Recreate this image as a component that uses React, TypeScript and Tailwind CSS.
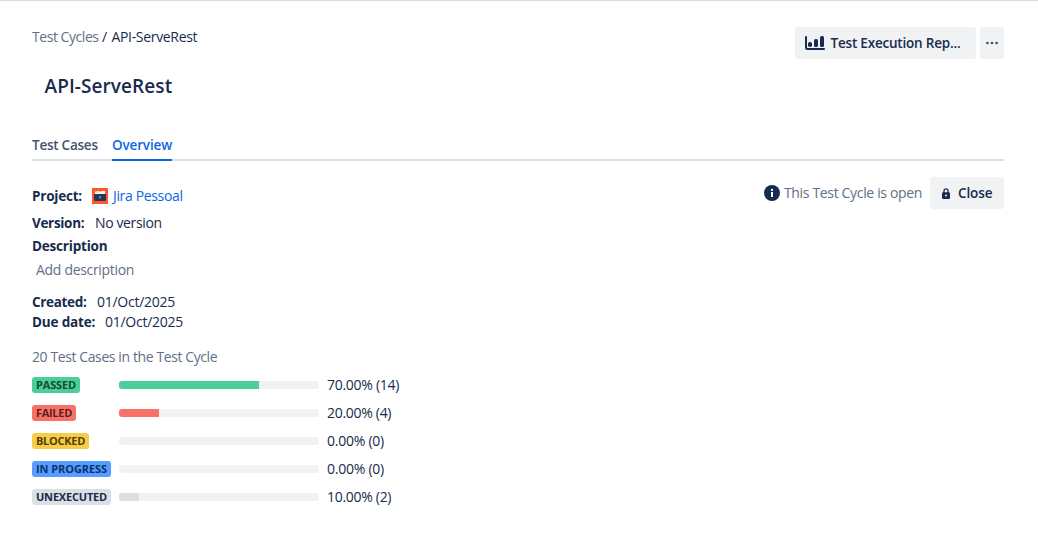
import React from "react";

const statuses = [
  { label: "PASSED", percent: 70, count: 14, badge: "w-12 bg-[#4bce97] text-[#164b35] tracking-[-0.16px]", bar: "bg-[#4bce97]", tracking: "tracking-[-0.29px]" },
  { label: "FAILED", percent: 20, count: 4, badge: "w-11 bg-[#f87168] text-[#5d1f1a] tracking-[-0.3px]", bar: "bg-[#f87168]", tracking: "tracking-[-0.3px]" },
  { label: "BLOCKED", percent: 0, count: 0, badge: "w-[57px] bg-[#f5cd47] text-[#533f04] tracking-[-0.28px]", bar: "bg-[#f5cd47]", tracking: "tracking-[-0.24px]" },
  { label: "IN PROGRESS", percent: 0, count: 0, badge: "w-[79px] bg-[#579dff] text-[#09326c] tracking-[-0.08px]", bar: "bg-[#579dff]", tracking: "tracking-[-0.24px]" },
  { label: "UNEXECUTED", percent: 10, count: 2, badge: "w-[79px] bg-[#dcdfe4] text-[#172b4d] tracking-[-0.19px]", bar: "bg-[#dcdfe4]", tracking: "tracking-[-0.3px]" },
];

function ChartIcon() {
  return (
    <svg className="h-[14px] w-5 shrink-0" viewBox="0 0 20 14" fill="#172b4d">
      <path d="M1 0a1 1 0 0 1 1 1v10.2q0 .8.8.8H19a1 1 0 0 1 0 2H2.5Q0 14 0 11.5V1a1 1 0 0 1 1-1Z" />
      <rect x="3" y="6" width="4" height="5" rx="1.8" />
      <rect x="9" y="3" width="4" height="8" rx="1.6" />
      <rect x="15" y="0" width="4" height="11" rx="1.5" />
    </svg>
  );
}

function MoreIcon() {
  return (
    <svg className="h-3 w-3" viewBox="0 0 12 12" fill="#44546f">
      <circle cx="1.4" cy="6" r="1.35" />
      <circle cx="6" cy="6" r="1.35" />
      <circle cx="10.6" cy="6" r="1.35" />
    </svg>
  );
}

function InfoIcon() {
  return (
    <svg className="h-4 w-4" viewBox="0 0 16 16">
      <circle cx="8" cy="8" r="8" fill="#172b4d" />
      <circle cx="8" cy="4.9" r="1.15" fill="#fff" />
      <path d="M7 7h2v5H7z" fill="#fff" />
    </svg>
  );
}

function LockIcon() {
  return (
    <svg className="h-[11px] w-2" viewBox="0 0 8 11">
      <path d="M2 5V2.8a2 2 0 0 1 4 0V5" fill="none" stroke="#172b4d" strokeWidth="1.3" />
      <rect y="4.3" width="8" height="6.7" rx="1.2" fill="#172b4d" />
      <circle cx="4" cy="7.6" r="1" fill="#f1f2f4" />
    </svg>
  );
}

function ProjectIcon() {
  return (
    <svg className="h-4 w-4" viewBox="0 0 16 16">
      <path d="M0 0h16v16H0z" fill="#ff5630" />
      <path d="M3 3h10v4H3z" fill="#f4f5f7" />
      <path d="M3 3h2v1.2H3z" fill="#ffc400" />
      <path d="M5 3.4h1.8v1.2H5z" fill="#79e2f2" />
      <path d="M7.5 3h1.6v1H7.5z" fill="#ff8f73" />
      <path d="M2 6h12v5.5q0 1.5-1.5 1.5h-9Q2 13 2 11.5Z" fill="#253858" />
      <path d="M7.9 8.3h1L8.2 10.3H7.2Z" fill="#deebff" />
    </svg>
  );
}

export default function App() {
  return (
    <div className="h-[542px] w-[1038px] overflow-hidden border-t border-[#dcdcdc] bg-white pl-8 pr-[34px] font-['Open_Sans','Noto_Sans',sans-serif] text-[14px] leading-5 whitespace-nowrap text-[#172b4d]">
      <header className="flex h-[58px] justify-between pt-[26px]">
        <nav className="flex">
          <a className="w-[70px] tracking-[-0.45px] text-[#626f86]">Test Cycles</a>
          <span className="w-[9.5px]">/</span>
          <span className="tracking-[-0.33px]">API-ServeRest</span>
        </nav>
        <div className="flex gap-1 text-[13.5px] font-semibold">
          <button className="flex h-8 w-[181px] items-center gap-[5.5px] rounded-[3px] bg-[#f1f2f4] pl-2.5">
            <ChartIcon />
            <span className="tracking-[-0.2px]">Test Execution Rep...</span>
          </button>
          <button className="flex h-8 w-6 items-center justify-center rounded-[3px] bg-[#f1f2f4]">
            <MoreIcon />
          </button>
        </div>
      </header>

      <h1 className="mt-[13px] h-7 pl-[12.5px] text-[19px] leading-7 font-semibold tracking-[0.08px]">API-ServeRest</h1>

      <div className="mt-[34px] flex h-[27px] gap-4 border-b-2 border-[#dcdfe4] text-[13.5px]">
        <span className="w-16 pt-px font-semibold tracking-[-0.24px] text-[#44546f]">Test Cases</span>
        <span className="h-[27px] w-[60px] border-b-2 border-[#0c66e4] pt-px font-semibold tracking-[-0.15px] text-[#0c66e4]">Overview</span>
      </div>

      <main className="flex justify-between pt-4">
        <section>
          <div className="mt-[9px] flex h-5 items-center">
            <b className="w-[60px] text-[13.5px] tracking-[-0.22px]">Project:</b>
            <ProjectIcon />
            <a className="ml-[5px] tracking-[-0.35px] text-[#0c66e4]">Jira Pessoal</a>
          </div>
          <div className="mt-[7px] flex">
            <b className="w-[63px] text-[13.5px] tracking-[-0.32px]">Version:</b>
            <span className="tracking-[-0.37px]">No version</span>
          </div>
          <h2 className="mt-[3px] text-[13.5px] font-bold tracking-[-0.2px]">Description</h2>
          <p className="mt-1 pl-1 tracking-[-0.31px] text-[#626f86]">Add description</p>
          <div className="mt-3 flex">
            <b className="w-[65px] text-[13.5px] tracking-[-0.32px]">Created:</b>
            <span className="tracking-[-0.26px]">01/Oct/2025</span>
          </div>
          <div className="flex">
            <b className="w-[73px] text-[13.5px] tracking-[-0.17px]">Due date:</b>
            <span className="tracking-[-0.26px]">01/Oct/2025</span>
          </div>
          <p className="mt-[15px] tracking-[-0.4px] text-[#626f86]">20 Test Cases in the Test Cycle</p>
          <ul className="mt-2 flex flex-col gap-2">
            {statuses.map((s) => (
              <li key={s.label} className="flex h-5 items-center">
                <div className="w-[87px]">
                  <span className={`block h-4 rounded-[3px] pl-1 text-[11px] leading-4 font-bold ${s.badge}`}>{s.label}</span>
                </div>
                <div className="h-2 w-[200px] overflow-hidden rounded-[3px] bg-[#f1f2f4]">
                  <div className={`h-2 ${s.bar}`} style={{ width: `${s.percent}%` }} />
                </div>
                <span className={`ml-2 ${s.tracking}`}>{`${s.percent.toFixed(2)}% (${s.count})`}</span>
              </li>
            ))}
          </ul>
        </section>

        <aside className="flex h-8 items-center">
          <InfoIcon />
          <span className="ml-1 w-[146px] tracking-[-0.34px] text-[#626f86]">This Test Cycle is open</span>
          <button className="flex h-8 w-[74px] items-center gap-2 rounded-[3px] bg-[#f1f2f4] pl-3 text-[13.5px] font-semibold">
            <LockIcon />
            <span className="tracking-[-0.1px]">Close</span>
          </button>
        </aside>
      </main>
    </div>
  );
}
